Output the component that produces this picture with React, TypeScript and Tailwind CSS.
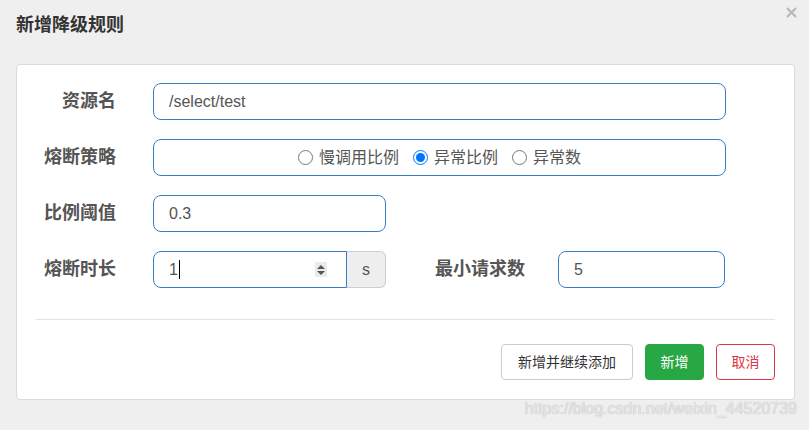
import React from 'react'

const FONT = "font-['Liberation_Sans','Noto_Sans_CJK_SC',sans-serif]"

function Label({ text, width }: { text: string; width: string }) {
    return (
        <div className={`${width} shrink-0 text-right text-[18px] font-bold leading-[37px] text-[#555]`}>
            {text}
        </div>
    )
}

function TextBox({ value, width }: { value: string; width: string }) {
    return (
        <div
            className={`${width} flex h-[37px] items-center rounded-[8px] border border-[#3b7dc4] px-[15px] text-[16px] text-[#555]`}
        >
            {value}
        </div>
    )
}

function Radio({ label, checked }: { label: string; checked?: boolean }) {
    return (
        <label className="flex items-center gap-[6px]">
            <input type="radio" name="grade" defaultChecked={checked} className="m-0 h-[15px] w-[15px]" />
            <span>{label}</span>
        </label>
    )
}

export default function App() {
    return (
        <div className={`relative h-[430px] w-[809px] overflow-hidden bg-[#efefef] ${FONT}`}>
            <div className="flex items-start justify-between">
                <h4 className="ml-[16px] mt-[13px] text-[18px] font-bold leading-[24px] text-[#333]">新增降级规则</h4>
                <svg className="mr-[12px] mt-[7px]" width="11" height="11" viewBox="0 0 11 11">
                    <path d="M1 1 L10 10 M10 1 L1 10" stroke="#b8b8b8" strokeWidth="2.2" />
                </svg>
            </div>

            <div className="ml-[16px] mt-[27px] h-[336px] w-[779px] rounded-[4px] border border-[#dcdcdc] bg-white">
                <div className="flex flex-col gap-[19px] pt-[18px]">
                    <div className="flex items-center">
                        <Label text="资源名" width="w-[99px]" />
                        <div className="ml-[37px]">
                            <TextBox value="/select/test" width="w-[573px]" />
                        </div>
                    </div>

                    <div className="flex items-center">
                        <Label text="熔断策略" width="w-[99px]" />
                        <div className="ml-[37px] flex h-[37px] w-[573px] items-center justify-center gap-[14px] rounded-[8px] border border-[#3b7dc4] text-[16px] text-[#555]">
                            <Radio label="慢调用比例" />
                            <Radio label="异常比例" checked />
                            <Radio label="异常数" />
                        </div>
                    </div>

                    <div className="flex items-center">
                        <Label text="比例阈值" width="w-[99px]" />
                        <div className="ml-[37px]">
                            <TextBox value="0.3" width="w-[233px]" />
                        </div>
                    </div>

                    <div className="flex items-center">
                        <Label text="熔断时长" width="w-[99px]" />
                        <div className="ml-[37px] flex h-[37px] w-[233px]">
                            <div className="flex flex-1 items-center rounded-l-[8px] border border-[#3b7dc4] pl-[15px] pr-[19px] text-[16px] text-[#555]">
                                <span>1</span>
                                <span className="ml-[1px] h-[19px] w-[1px] bg-black" />
                                <div className="ml-auto flex h-[15px] w-[12px] flex-col items-center justify-center gap-[2px] bg-[#ebebeb]">
                                    <svg width="8" height="4" viewBox="0 0 8 4">
                                        <path d="M0 4 L4 0 L8 4 Z" fill="#555" />
                                    </svg>
                                    <svg width="8" height="4" viewBox="0 0 8 4">
                                        <path d="M0 0 L4 4 L8 0 Z" fill="#555" />
                                    </svg>
                                </div>
                            </div>
                            <div className="flex w-[39px] items-center justify-center rounded-r-[6px] border border-l-0 border-[#cfcfcf] bg-[#eeeeee] text-[16px] text-[#555]">
                                s
                            </div>
                        </div>
                        <Label text="最小请求数" width="w-[139px]" />
                        <div className="ml-[33px]">
                            <TextBox value="5" width="w-[167px]" />
                        </div>
                    </div>
                </div>

                <div className="mx-[19px] mt-[31px] h-px bg-[#e2e2e2]" />

                <div className="mr-[19px] mt-[24px] flex justify-end gap-[12px] text-[14px]">
                    <button className="h-[36px] w-[132px] rounded-[4px] border border-[#cccccc] bg-white text-[#333]">
                        新增并继续添加
                    </button>
                    <button className="h-[36px] w-[59px] rounded-[4px] border border-[#28a745] bg-[#28a745] text-white">
                        新增
                    </button>
                    <button className="h-[36px] w-[59px] rounded-[4px] border border-[#dc3545] bg-white text-[#dc3545]">
                        取消
                    </button>
                </div>
            </div>

            <div className="absolute bottom-[9px] right-[12px] text-[16px] text-[#e6e6e6] [text-shadow:0_0_1px_#aaa]">
                https://blog.csdn.net/weixin_44520739
            </div>
        </div>
    )
}
